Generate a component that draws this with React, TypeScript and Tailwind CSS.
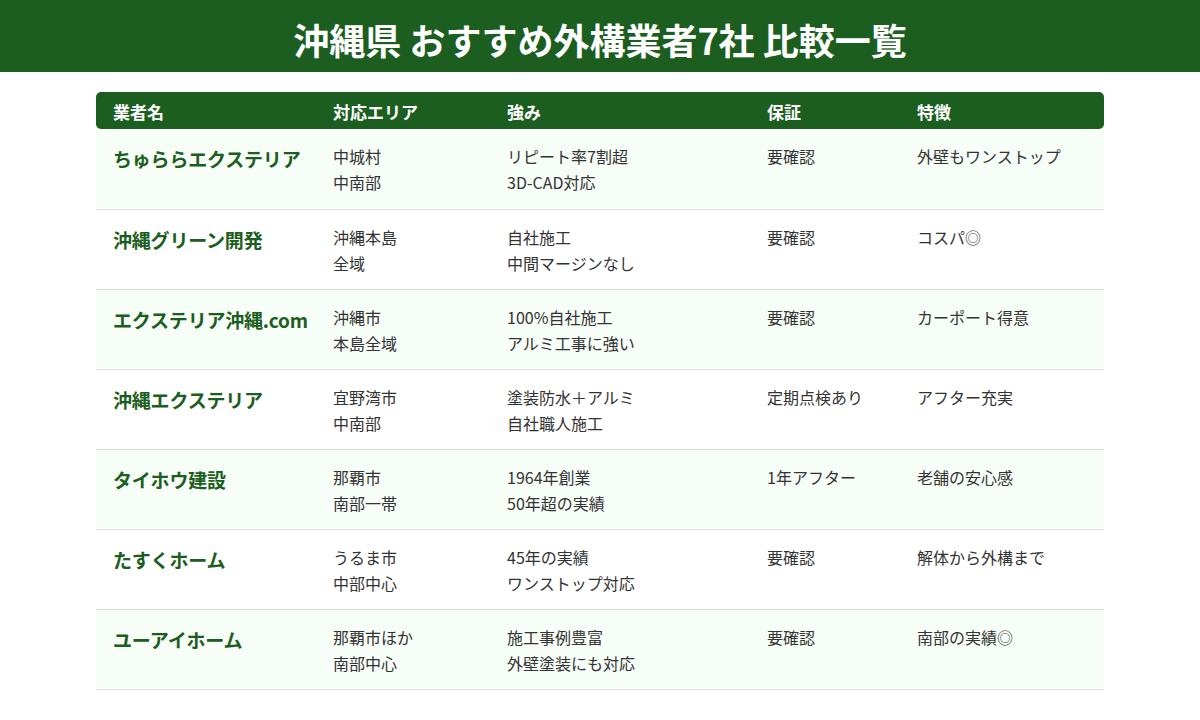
import React from 'react';

const rows = [
  { name: 'ちゅららエクステリア', area: ['中城村', '中南部'], strength: ['リピート率7割超', '3D-CAD対応'], warranty: '要確認', feature: '外壁もワンストップ' },
  { name: '沖縄グリーン開発', area: ['沖縄本島', '全域'], strength: ['自社施工', '中間マージンなし'], warranty: '要確認', feature: 'コスパ◎' },
  { name: 'エクステリア沖縄.com', area: ['沖縄市', '本島全域'], strength: ['100%自社施工', 'アルミ工事に強い'], warranty: '要確認', feature: 'カーポート得意' },
  { name: '沖縄エクステリア', area: ['宜野湾市', '中南部'], strength: ['塗装防水＋アルミ', '自社職人施工'], warranty: '定期点検あり', feature: 'アフター充実' },
  { name: 'タイホウ建設', area: ['那覇市', '南部一帯'], strength: ['1964年創業', '50年超の実績'], warranty: '1年アフター', feature: '老舗の安心感' },
  { name: 'たすくホーム', area: ['うるま市', '中部中心'], strength: ['45年の実績', 'ワンストップ対応'], warranty: '要確認', feature: '解体から外構まで' },
  { name: 'ユーアイホーム', area: ['那覇市ほか', '南部中心'], strength: ['施工事例豊富', '外壁塗装にも対応'], warranty: '要確認', feature: '南部の実績◎' },
];

export default function App() {
  return (
    <div className="w-[1200px] h-[720px] bg-white font-['Noto_Sans_CJK_JP',sans-serif] overflow-hidden">
      <div className="h-[72px] bg-[#1b5e20] flex items-center justify-center pt-[6px]">
        <h1 className="text-[36px] font-bold text-white leading-none">沖縄県 おすすめ外構業者7社 比較一覧</h1>
      </div>
      <div className="px-[96px] pt-[20px]">
        <table className="w-full border-collapse table-fixed">
          <colgroup>
            <col className="w-[220px]" />
            <col className="w-[174px]" />
            <col className="w-[260px]" />
            <col className="w-[150px]" />
            <col />
          </colgroup>
          <thead>
            <tr className="bg-[#1b5e20] text-white text-left text-[17px] font-bold h-[37px]">
              <th className="pl-[17px] pt-[3px] rounded-tl-[5px] rounded-bl-[5px]">業者名</th>
              <th className="pl-[17px] pt-[3px]">対応エリア</th>
              <th className="pl-[17px] pt-[3px]">強み</th>
              <th className="pl-[17px] pt-[3px]">保証</th>
              <th className="pl-[17px] pt-[3px] rounded-tr-[5px] rounded-br-[5px]">特徴</th>
            </tr>
          </thead>
          <tbody>
            {rows.map((r, i) => (
              <tr key={r.name} className={`h-[80px] border-b border-[#dce3dc] align-top ${i % 2 === 0 ? 'bg-[#f7fdf7]' : 'bg-white'}`}>
                <td className="pl-[17px] pt-[16px] text-[19px] font-bold text-[#1b5e20] leading-[28px] whitespace-nowrap tracking-[-0.2px]">{r.name}</td>
                <td className="pl-[17px] pt-[14px] text-[16px] text-[#333] leading-[26px]">
                  {r.area.map((t) => <div key={t}>{t}</div>)}
                </td>
                <td className="pl-[17px] pt-[14px] text-[16px] text-[#333] leading-[26px]">
                  {r.strength.map((t) => <div key={t}>{t}</div>)}
                </td>
                <td className="pl-[17px] pt-[14px] text-[16px] text-[#333] leading-[26px]">{r.warranty}</td>
                <td className="pl-[17px] pt-[14px] text-[16px] text-[#333] leading-[26px]">{r.feature}</td>
              </tr>
            ))}
          </tbody>
        </table>
      </div>
    </div>
  );
}
